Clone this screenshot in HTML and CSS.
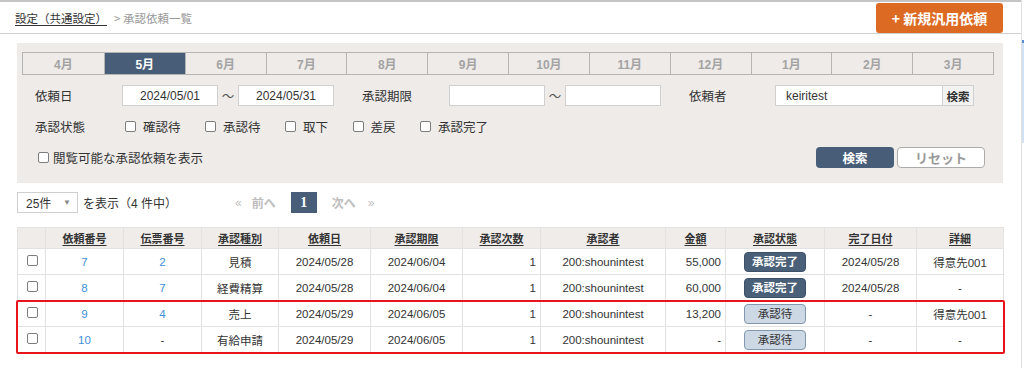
FILE: index.html
```html
<!DOCTYPE html>
<html lang="ja">
<head>
<meta charset="utf-8">
<title>承認依頼一覧</title>
<link rel="stylesheet" href="styles.css">
</head>
<body>
<div class="page">
  <div class="main">
    <header class="topbar">
      <div class="crumb"><a class="crumb-link">設定（共通設定）</a><span class="crumb-sep">&gt; 承認依頼一覧</span></div>
      <div class="new-btn">+ 新規汎用依頼</div>
    </header>

    <section class="filter">
      <div class="tabs">
        <div class="tab">4月</div>
        <div class="tab on">5月</div>
        <div class="tab">6月</div>
        <div class="tab">7月</div>
        <div class="tab">8月</div>
        <div class="tab">9月</div>
        <div class="tab">10月</div>
        <div class="tab">11月</div>
        <div class="tab">12月</div>
        <div class="tab">1月</div>
        <div class="tab">2月</div>
        <div class="tab">3月</div>
      </div>

      <div class="row">
        <span class="lbl">依頼日</span>
        <input class="txt" type="text" value="2024/05/01">
        <span class="tilde">～</span>
        <input class="txt" type="text" value="2024/05/31">
        <span class="lbl lbl-gap">承認期限</span>
        <input class="txt" type="text" value="">
        <span class="tilde">～</span>
        <input class="txt" type="text" value="">
        <span class="lbl lbl-gap lbl-n">依頼者</span>
        <input class="txt wide" type="text" value="keiritest">
        <span class="sbtn">検索</span>
      </div>

      <div class="row">
        <span class="lbl lbl-s">承認状態</span>
        <label class="chk"><span class="box"></span>確認待</label>
        <label class="chk"><span class="box"></span>承認待</label>
        <label class="chk"><span class="box"></span>取下</label>
        <label class="chk"><span class="box"></span>差戻</label>
        <label class="chk"><span class="box"></span>承認完了</label>
      </div>

      <div class="row row-last">
        <label class="chk chk-view"><span class="box"></span>閲覧可能な承認依頼を表示</label>
        <div class="actions">
          <span class="btn-search">検索</span>
          <span class="btn-reset">リセット</span>
        </div>
      </div>
    </section>

    <div class="pagerow">
      <div class="sel"><span>25件</span><span class="caret">▼</span></div>
      <span class="count">を表示（4 件中）</span>
      <span class="pg-arrow">«</span>
      <span class="pg-txt pg-prev">前へ</span>
      <span class="pg-cur">1</span>
      <span class="pg-txt pg-next">次へ</span>
      <span class="pg-arrow pg-last">»</span>
    </div>

    <div class="tbl-wrap">
      <table class="list">
        <colgroup>
          <col class="w1"><col class="w2"><col class="w3"><col class="w4"><col class="w5"><col class="w6">
          <col class="w7"><col class="w8"><col class="w9"><col class="w10"><col class="w11"><col class="w12">
        </colgroup>
        <thead>
          <tr class="hr">
            <th></th>
            <th><span class="u">依頼番号</span></th>
            <th><span class="u">伝票番号</span></th>
            <th><span class="u">承認種別</span></th>
            <th><span class="u">依頼日</span></th>
            <th><span class="u">承認期限</span></th>
            <th><span class="u">承認次数</span></th>
            <th><span class="u">承認者</span></th>
            <th><span class="u">金額</span></th>
            <th><span class="u">承認状態</span></th>
            <th><span class="u">完了日付</span></th>
            <th><span class="u">詳細</span></th>
          </tr>
        </thead>
        <tbody>
          <tr class="r">
            <td class="cb"><span class="box"></span></td>
            <td class="c link">7</td>
            <td class="c link">2</td>
            <td class="c">見積</td>
            <td class="c">2024/05/28</td>
            <td class="c">2024/06/04</td>
            <td class="num">1</td>
            <td class="c">200:shounintest</td>
            <td class="num">55,000</td>
            <td class="c"><span class="badge done">承認完了</span></td>
            <td class="c">2024/05/28</td>
            <td class="c">得意先001</td>
          </tr>
          <tr class="r">
            <td class="cb"><span class="box"></span></td>
            <td class="c link">8</td>
            <td class="c link">7</td>
            <td class="c">経費精算</td>
            <td class="c">2024/05/28</td>
            <td class="c">2024/06/04</td>
            <td class="num">1</td>
            <td class="c">200:shounintest</td>
            <td class="num">60,000</td>
            <td class="c"><span class="badge done">承認完了</span></td>
            <td class="c">2024/05/28</td>
            <td class="c">-</td>
          </tr>
          <tr class="r">
            <td class="cb"><span class="box"></span></td>
            <td class="c link">9</td>
            <td class="c link">4</td>
            <td class="c">売上</td>
            <td class="c">2024/05/29</td>
            <td class="c">2024/06/05</td>
            <td class="num">1</td>
            <td class="c">200:shounintest</td>
            <td class="num">13,200</td>
            <td class="c"><span class="badge wait">承認待</span></td>
            <td class="c">-</td>
            <td class="c">得意先001</td>
          </tr>
          <tr class="r">
            <td class="cb"><span class="box"></span></td>
            <td class="c link">10</td>
            <td class="c">-</td>
            <td class="c">有給申請</td>
            <td class="c">2024/05/29</td>
            <td class="c">2024/06/05</td>
            <td class="num">1</td>
            <td class="c">200:shounintest</td>
            <td class="num">-</td>
            <td class="c"><span class="badge wait">承認待</span></td>
            <td class="c">-</td>
            <td class="c">-</td>
          </tr>
        </tbody>
      </table>
      <div class="hl"></div>
    </div>
  </div>
  <div class="side"><div class="thumb"></div></div>
</div>
</body>
</html>
```

FILE: styles.css
```css
* { box-sizing: border-box; }
html, body { margin: 0; padding: 0; }
body {
  font-family: "Liberation Sans", "Noto Sans CJK JP", sans-serif;
  color: #333;
  background: #fff;
}
.page { display: flex; width: 1024px; height: 368px; overflow: hidden; }
.main { width: 1021px; flex: none; }
.side { width: 3px; border-left: 1px solid #e0e0e0; flex: none; }
.thumb { margin-top: 40px; height: 103px; background: #d2e1f4; border-top: 3px solid #5a8ed4; }

/* top bar */
.topbar {
  height: 34px;
  border-top: 2px solid #c4c4c4;
  border-bottom: 1px solid #cfcfcf;
  display: flex;
  justify-content: space-between;
  align-items: flex-end;
  padding: 0 18px 0 15px;
}
.crumb { align-self: center; font-size: 11.5px; font-family: "Noto Sans CJK JP", sans-serif; }
.crumb-link { color: #333; text-decoration: underline; text-underline-offset: 2px; }
.crumb-sep { color: #999; margin-left: 7px; }
.new-btn {
  width: 127px; height: 30px;
  background: #dc6a23;
  color: #fff;
  font-weight: bold;
  font-size: 14px;
  border-radius: 3px;
  display: flex; align-items: center; justify-content: center;
  font-family: "Noto Sans CJK JP", sans-serif;
}

/* filter panel */
.filter {
  margin: 9px 0 0 17px;
  width: 986px;
  height: 140px;
  padding: 9px 18px 15px 5px;
  background: #eeebe9;
}
.tabs {
  display: grid;
  grid-template-columns: repeat(12, 1fr);
  width: 972px;
  height: 23px;
  border: 1px solid #b4b4b4;
}
.tab {
  border-left: 1px solid #b4b4b4;
  display: flex; align-items: center; justify-content: center;
  font-size: 12px; font-weight: bold; color: #a3a3a3;
}
.tab:first-child { border-left: 0; }
.tab.on { background: #475d78; color: #fff; }

.row {
  display: flex; align-items: center;
  height: 21px; margin-top: 10px;
  padding-left: 13px;
  font-size: 12.5px;
}
.lbl { width: 87px; flex: none; }
.lbl-gap { margin-left: 28px; }
.lbl-n { width: 86px; }
.lbl-s { width: 90px; }
.txt {
  width: 96px; height: 21px;
  border: 1px solid #d0d0d0;
  background: #fff;
  font: 12px "Liberation Sans", sans-serif;
  color: #333;
  text-align: center;
  padding: 0;
  margin: 0;
  outline: none;
}
.txt.wide { width: 168px; text-align: left; padding-left: 10px; }
.tilde { width: 20px; text-align: center; color: #555; }
.sbtn {
  width: 31px; height: 21px;
  border: 1px solid #d0d0d0; border-left: 0;
  background: #f2f2f2;
  font-size: 11.5px; font-weight: bold; color: #333;
  display: flex; align-items: center; justify-content: center;
}
.chk { display: flex; align-items: center; margin-right: 24.5px; }
.box {
  display: inline-block;
  width: 11px; height: 11px;
  border: 1px solid #7d7d7d;
  border-radius: 2px;
  background: #fff;
  margin-right: 7px;
  flex: none;
}
.row-last { justify-content: space-between; }
.chk-view { margin-left: 3px; margin-right: 0; }
.chk-view .box { margin-right: 4px; }
.actions { display: flex; }
.btn-search {
  width: 78px; height: 21px;
  background: #475d78; color: #fff;
  border-radius: 4px;
  font-weight: bold; font-size: 12.5px;
  display: flex; align-items: center; justify-content: center;
}
.btn-reset {
  width: 88px; height: 21px; margin-left: 3px;
  background: #fff; color: #9a9a9a;
  border: 1px solid #ababab;
  border-radius: 4px;
  font-weight: bold; font-size: 13px;
  display: flex; align-items: center; justify-content: center;
}

/* pager */
.pagerow {
  display: flex; align-items: center;
  height: 21px;
  margin: 9px 0 0 17px;
  font-size: 12px;
}
.sel {
  width: 61px; height: 21px;
  border: 1px solid #cfcfcf;
  background: #fff;
  display: flex; align-items: center; justify-content: space-between;
  padding: 0 6px 0 8px;
}
.caret { font-size: 8px; color: #888; }
.count { width: 152px; margin-left: 5px; flex: none; }
.pg-arrow { color: #c0c0c0; font-size: 12px; }
.pg-txt { color: #bdbdbd; font-weight: bold; width: 24px; }
.pg-prev { margin-left: 10px; }
.pg-cur {
  width: 26px; height: 21px; margin-left: 15px;
  background: #475d78; color: #fff;
  font: bold 14px "Liberation Serif", serif;
  display: flex; align-items: center; justify-content: center;
}
.pg-next { margin-left: 15px; }
.pg-last { margin-left: 12px; }

/* table */
.tbl-wrap { position: relative; margin: 14px 0 0 17px; width: 986px; }
.list {
  width: 986px;
  table-layout: fixed;
  border-collapse: collapse;
  font-size: 11.5px;
}
.w1 { width: 28px; } .w2 { width: 78px; } .w3 { width: 78px; } .w4 { width: 77px; }
.w5 { width: 92px; } .w6 { width: 92px; } .w7 { width: 78px; } .w8 { width: 125px; }
.w9 { width: 60px; } .w10 { width: 99px; } .w11 { width: 92px; } .w12 { width: 87px; }
.list th, .list td { border: 1px solid #e2e2e2; padding: 0; }
.hr { height: 21px; background: #efecea; }
.list th { font-weight: bold; color: #333; font-size: 11px; text-align: center; }
.u { text-decoration: underline; text-underline-offset: 2px; }
.r { height: 26px; }
.c { text-align: center; }
.num { text-align: right; padding-right: 4px !important; }
.link { color: #3d8fd6; }
.cb { padding-left: 9px !important; vertical-align: middle; }
.cb .box { display: block; margin: -3px 0 0 0; }
.badge {
  display: inline-block;
  width: 62px; height: 20px; line-height: 18px;
  border-radius: 4px;
  font-size: 11.5px;
  vertical-align: middle;
}
.done { background: #4a5f78; border: 1px solid #3e5068; color: #fff; font-weight: bold; }
.wait { background: #cdd8e5; border: 1px solid #8396ad; color: #333; }
.hl {
  position: absolute;
  left: -1px; top: 73px;
  width: 989px; height: 54px;
  border: 2px solid #e8141c;
  border-radius: 2px;
  pointer-events: none;
}
```
